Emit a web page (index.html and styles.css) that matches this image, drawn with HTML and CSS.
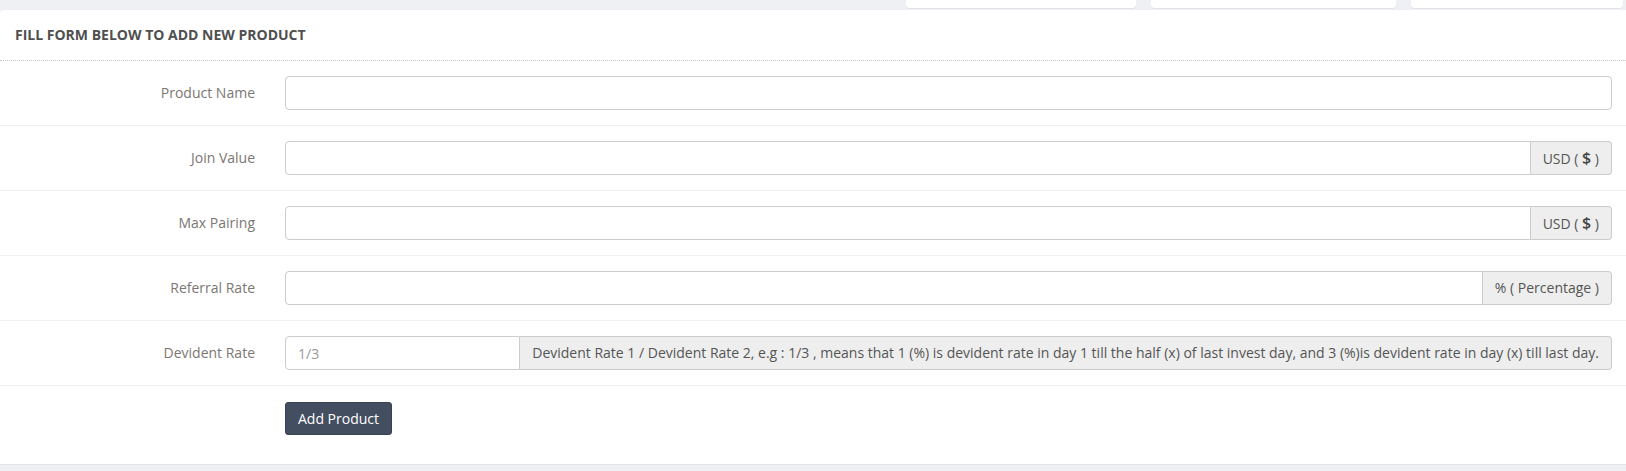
FILE: index.html
```html
<!DOCTYPE html>
<html>
<head>
<meta charset="utf-8">
<link rel="stylesheet" href="styles.css">
</head>
<body>
<div class="topbar">
  <div class="spacer"></div>
  <div class="card c1"></div>
  <div class="card c2"></div>
  <div class="card c3"></div>
</div>
<div class="panel">
  <div class="panel-head">Fill form below to add new product</div>
  <form class="form">
    <div class="row">
      <label class="lbl">Product Name</label>
      <div class="group"><input class="inp" type="text"></div>
    </div>
    <div class="row">
      <label class="lbl">Join Value</label>
      <div class="group"><input class="inp" type="text"><span class="addon">USD ( <b class="dollar">$</b> )</span></div>
    </div>
    <div class="row">
      <label class="lbl">Max Pairing</label>
      <div class="group"><input class="inp" type="text"><span class="addon">USD ( <b class="dollar">$</b> )</span></div>
    </div>
    <div class="row">
      <label class="lbl">Referral Rate</label>
      <div class="group"><input class="inp" type="text"><span class="addon">% ( Percentage )</span></div>
    </div>
    <div class="row">
      <label class="lbl">Devident Rate</label>
      <div class="group"><input class="inp" type="text" placeholder="1/3"><span class="addon">Devident Rate 1 / Devident Rate 2, e.g : 1/3 , means that 1 (%) is devident rate in day 1 till the half (x) of last invest day, and 3 (%)is devident rate in day (x) till last day.</span></div>
    </div>
    <div class="row last">
      <div class="lbl"></div>
      <div><button class="btn" type="button">Add Product</button></div>
    </div>
  </form>
</div>
</body>
</html>
```
FILE: styles.css
```css
* { box-sizing: border-box; }
html, body { margin: 0; padding: 0; }
body {
  background: #eef0f4;
  font-family: "Open Sans", "Liberation Sans", sans-serif;
  font-size: 14px;
  color: #555;
  width: 1626px;
  height: 471px;
  overflow: hidden;
}
.topbar {
  height: 10px;
  display: flex;
  gap: 15px;
}
.spacer { width: 891px; }
.card {
  height: 8px;
  background: #fff;
  border-radius: 0 0 4px 4px;
  box-shadow: 0 1px 0 #e2e3e8;
}
.c1 { width: 230px; }
.c2 { width: 245px; }
.c3 { flex: 1; margin-right: 3px; }
.panel {
  background: #fff;
  border-radius: 4px 0 0 0;
  border-bottom: 1px solid #e3e4e8;
  height: 455px;
}
.panel-head {
  height: 51px;
  padding: 15px 15px 0;
  font-size: 14px;
  line-height: 20px;
  font-weight: 700;
  text-transform: uppercase;
  color: #4f4f4f;
  border-bottom: 1px dotted #c8c8c8;
}
.form { display: block; }
.row {
  display: grid;
  grid-template-columns: 255px 1fr;
  column-gap: 30px;
  align-items: center;
  padding: 15px 14px 15px 0;
  border-bottom: 1px solid #efefef;
}
.row.last { border-bottom: 0; padding-top: 16px; }
.lbl {
  text-align: right;
  color: #7c7673;
  font-size: 14px;
  padding-bottom: 2px;
}
.group {
  display: flex;
  height: 34px;
}
.inp {
  flex: 1;
  min-width: 0;
  height: 34px;
  border: 1px solid #ccc;
  border-radius: 4px;
  padding: 6px 12px;
  font-family: inherit;
  font-size: 14px;
  color: #555;
  outline: none;
}
.inp::placeholder { color: #999; }
.group .inp:not(:last-child) { border-radius: 4px 0 0 4px; }
.addon {
  white-space: nowrap;
  background: #eee;
  border: 1px solid #ccc;
  border-left: 0;
  border-radius: 0 4px 4px 0;
  padding: 0 12px;
  line-height: 32px;
  font-size: 14px;
  color: #555;
}
.dollar { font-size: 16px; font-weight: 600; color: #444; }
.btn {
  background: #434e61;
  color: #fff;
  border: 1px solid #39424f;
  border-radius: 3px;
  height: 33px;
  padding: 0 12px;
  font-family: inherit;
  font-size: 14px;
}
```
